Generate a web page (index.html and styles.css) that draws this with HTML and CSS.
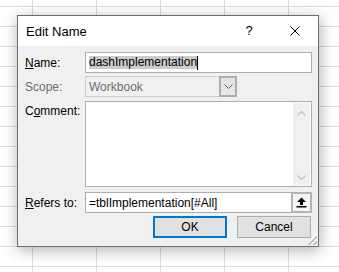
FILE: index.html
```html
<!DOCTYPE html>
<html lang="en">
<head>
    <meta charset="UTF-8">
    <title>Edit Name</title>
    <link rel="stylesheet" href="styles.css">
</head>
<body>

<div class="dialog">
    <!-- Titelleiste -->
    <div class="titlebar">
        <span class="title">Edit Name</span>
        <span class="tb-btn help">?</span>
        <span class="tb-btn close">
            <svg width="10" height="10" viewBox="0 0 10 10"><path d="M0.5 0.5 L9.5 9.5 M9.5 0.5 L0.5 9.5" stroke="#000" stroke-width="1" fill="none"/></svg>
        </span>
    </div>

    <div class="content">
        <div class="row">
            <label class="lbl"><u>N</u>ame:</label>
            <div class="field"><span class="sel">dashImplementation</span><span class="caret"></span></div>
        </div>

        <div class="row row-scope">
            <label class="lbl disabled">Scope:</label>
            <div class="combo">
                <span class="combo-text">Workbook</span>
                <span class="combo-btn">
                    <svg width="9" height="5" viewBox="0 0 9 5"><path d="M0.5 0.5 L4.5 4.5 L8.5 0.5" stroke="#606060" stroke-width="1" fill="none"/></svg>
                </span>
            </div>
        </div>

        <div class="row row-comment">
            <label class="lbl">C<u>o</u>mment:</label>
            <div class="textarea">
                <div class="scrollbar">
                    <svg width="9" height="5" viewBox="0 0 9 5"><path d="M0.5 4.5 L4.5 0.5 L8.5 4.5" stroke="#c2c2c2" stroke-width="1.4" fill="none"/></svg>
                    <svg width="9" height="5" viewBox="0 0 9 5"><path d="M0.5 0.5 L4.5 4.5 L8.5 0.5" stroke="#c2c2c2" stroke-width="1.4" fill="none"/></svg>
                </div>
            </div>
        </div>

        <div class="row row-refers">
            <label class="lbl"><u>R</u>efers to:</label>
            <div class="field refers">
                <span class="ref-text">=tblImplementation[#All]</span>
                <span class="collapse-btn">
                    <svg width="11" height="11" viewBox="0 0 11 11"><path d="M5.5 0.5 L10 5 L7 5 L7 8 L4 8 L4 5 L1 5 Z" fill="#000"/><rect x="0.5" y="9" width="10" height="1.5" fill="#000"/></svg>
                </span>
            </div>
        </div>

        <div class="buttons">
            <button class="btn btn-default">OK</button>
            <button class="btn">Cancel</button>
        </div>
    </div>

    <div class="grip"></div>
</div>

</body>
</html>
```

FILE: styles.css
```css
body {
    margin: 0;
    width: 339px;
    height: 272px;
    overflow: hidden;
    font-family: "Liberation Sans", Arial, sans-serif;
    font-size: 12px;
    background-color: #fff;
    background-image:
        linear-gradient(to right, #dcdcdc 1px, transparent 1px),
        linear-gradient(to bottom, #dcdcdc 1px, transparent 1px);
    background-size: 64px 100%, 100% 20px;
    background-position: 32px 0, 0 6px;
    padding-top: 15px;
    box-sizing: border-box;
}
.dialog {
    position: relative;
    margin-left: 17px;
    width: 302px;
    height: 232px;
    box-sizing: border-box;
    border: 1px solid #6e6e6e;
    background: #f0f0f0;
    box-shadow: 1px 3px 14px rgba(0, 0, 0, 0.32);
}
.titlebar {
    height: 30px;
    background: #fff;
    display: flex;
    align-items: center;
}
.title {
    flex: 1;
    padding-left: 8px;
    color: #000;
    font-size: 13px;
}
.tb-btn {
    display: flex;
    align-items: center;
    justify-content: center;
    height: 30px;
}
.help {
    width: 46px;
    font-size: 13px;
    padding-bottom: 1px;
}
.close {
    width: 46px;
}
.content {
    padding: 6px 6px 8px 0;
}
.row {
    display: flex;
    align-items: flex-start;
    height: 21px;
}
.row-scope { margin-top: 3px; }
.row-comment { margin-top: 4px; height: 86px; }
.row-refers { margin-top: 5px; }
.lbl {
    width: 67px;
    padding-left: 7px;
    padding-top: 4px;
    box-sizing: border-box;
    color: #000;
    line-height: 14px;
}
.row-comment .lbl { padding-top: 3px; }
.lbl.disabled { color: #6d6d6d; }
.field {
    flex: 1;
    height: 21px;
    box-sizing: border-box;
    border: 1px solid #adadad;
    background: #fff;
    display: flex;
    align-items: center;
    padding-left: 3px;
    color: #000;
}
.sel {
    background: #cccccc;
    line-height: 13px;
}
.caret {
    width: 1px;
    height: 14px;
    background: #000;
}
.combo {
    width: 152px;
    height: 21px;
    box-sizing: border-box;
    border: 1px solid #cccccc;
    display: flex;
    align-items: center;
}
.combo-text {
    flex: 1;
    padding-left: 3px;
    color: #6d6d6d;
}
.combo-btn {
    width: 18px;
    height: 21px;
    margin: -1px -1px -1px 0;
    box-sizing: border-box;
    border: 2px solid #adadad;
    background: #e5e5e5;
    display: flex;
    align-items: center;
    justify-content: center;
}
.textarea {
    flex: 1;
    height: 86px;
    box-sizing: border-box;
    border: 1px solid #adadad;
    background: #fff;
    display: flex;
    justify-content: flex-end;
    padding: 1px 1px 1px 0;
}
.scrollbar {
    width: 17px;
    background: #f0f0f0;
    display: flex;
    flex-direction: column;
    justify-content: space-between;
    align-items: center;
    padding: 8px 0 5px;
    box-sizing: border-box;
}
.refers {
    padding-right: 0;
}
.ref-text { flex: 1; }
.collapse-btn {
    width: 21px;
    height: 21px;
    margin: -1px -1px -1px 0;
    box-sizing: border-box;
    border: 2px solid #b4b4b4;
    background: #f4f4f4;
    display: flex;
    align-items: center;
    justify-content: center;
}
.buttons {
    margin-top: 3px;
    display: flex;
    justify-content: flex-end;
    gap: 10px;
    padding-right: 1px;
}
.btn {
    width: 74px;
    height: 22px;
    box-sizing: border-box;
    border: 1px solid #adadad;
    background: #e1e1e1;
    font-family: "Liberation Sans", Arial, sans-serif;
    font-size: 12px;
    color: #000;
    padding: 0;
}
.btn-default {
    border: 2px solid #0078d7;
}
.grip {
    position: absolute;
    right: 1px;
    bottom: 1px;
    width: 11px;
    height: 11px;
    background: repeating-linear-gradient(135deg, transparent 0 2px, #b8b8b8 2px 3.5px);
    clip-path: polygon(100% 0, 100% 100%, 0 100%);
}
```
